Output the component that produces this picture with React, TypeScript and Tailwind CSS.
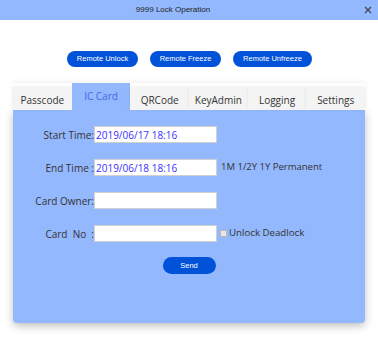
import React from "react";

const tabs = ["Passcode", "IC Card", "QRCode", "KeyAdmin", "Logging", "Settings"];

function Row({ label, value, children }: { label: string; value?: string; children?: React.ReactNode }) {
  return (
    <div className="flex items-center h-[17px]">
      <div className="w-[81px] text-right whitespace-pre text-[#333] text-[10px] leading-none">{label}</div>
      <div className="w-[123px] h-[17px] bg-white border border-[#d0d0d0] flex items-center px-[1px] text-[10px] text-[#3a2fff] leading-none">
        {value}
      </div>
      {children}
    </div>
  );
}

export default function App() {
  return (
    <div className="w-[378px] h-[342px] bg-white relative" style={{ fontFamily: '"Open Sans", sans-serif' }}>
      <div className="h-[20px] bg-[#94b8fd] flex items-center justify-center relative pr-[32px]" style={{ fontFamily: '"Liberation Sans", Arial, sans-serif' }}>
        <span className="text-[8px] text-[#222]">9999 Lock Operation</span>
        <svg className="absolute right-[6px] top-[6px]" width="8" height="8" viewBox="0 0 8 8">
          <path d="M1 1L7 7M7 1L1 7" stroke="#444" strokeWidth="1.2" />
        </svg>
      </div>
      <div className="flex justify-center gap-[12px] pt-[31px] pl-[1px]" style={{ fontFamily: '"Liberation Sans", Arial, sans-serif' }}>
        <button className="w-[71px] h-[16px] rounded-full bg-[#0052d9] text-white text-[7.5px]">Remote Unlock</button>
        <button className="w-[71px] h-[16px] rounded-full bg-[#0052d9] text-white text-[7.5px]">Remote Freeze</button>
        <button className="w-[79px] h-[16px] rounded-full bg-[#0052d9] text-white text-[7.5px]">Remote Unfreeze</button>
      </div>
      <div className="mx-[13px] mt-[16px]">
        <div className="flex items-end h-[27px] shadow-[0_-2px_4px_rgba(0,0,0,0.05)]">
          {tabs.map((t) =>
            t === "IC Card" ? (
              <div key={t} className="flex-1 h-[27px] bg-[#94b8fd] text-[#3f6ae8] text-[10px] flex justify-center pt-[6px]">
                {t}
              </div>
            ) : (
              <div key={t} className="flex-1 h-[22px] bg-[#f4f4f4] text-[#333] text-[10px] flex items-center justify-center pt-[2px] shadow-[0_-1px_3px_rgba(0,0,0,0.08)]">
                {t}
              </div>
            )
          )}
        </div>
        <div className="h-[213px] bg-[#94b8fd] rounded-b-[4px] shadow-[0_3px_8px_rgba(0,0,0,0.25)] pt-[16px] flex flex-col gap-[16px]">
          <Row label="Start Time:" value="2019/06/17 18:16" />
          <Row label="End Time :" value="2019/06/18 18:16">
            <span className="ml-[4px] text-[9.5px] text-[#333]">1M 1/2Y 1Y Permanent</span>
          </Row>
          <Row label="Card Owner:" />
          <Row label={"Card  No  :"}>
            <span className="ml-[3px] w-[7px] h-[7px] bg-[#e6e6e6] border border-[#bbb]" />
            <span className="ml-[2px] text-[9.7px] text-[#333]">Unlock Deadlock</span>
          </Row>
          <div className="flex justify-center -mt-[1px]">
            <button className="w-[53px] h-[17px] rounded-full bg-[#0052d9] text-white text-[7.5px]" style={{ fontFamily: '"Liberation Sans", Arial, sans-serif' }}>
              Send
            </button>
          </div>
        </div>
      </div>
    </div>
  );
}
